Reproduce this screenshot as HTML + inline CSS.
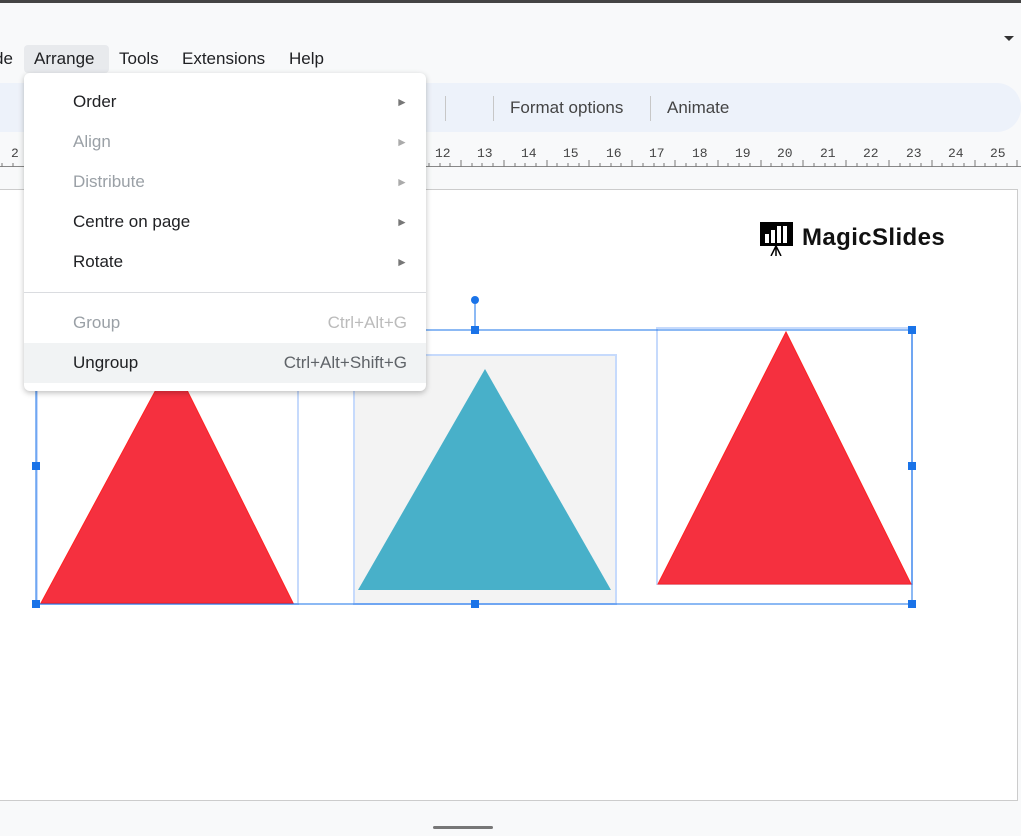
<!DOCTYPE html>
<html><head><style>
*{margin:0;padding:0;box-sizing:border-box}
body{width:1021px;height:836px;overflow:hidden;background:#f8f9fa;font-family:"Liberation Sans",Arial,sans-serif;position:relative}
.a{position:absolute}
.menu span{position:absolute;top:49px;font-size:17px;color:#202124}
.mi{position:absolute;left:73px;font-size:17px;color:#202124}
.dis{color:#9aa0a6}
.arr{position:absolute;left:396px;font-size:12px;color:#777}
.sc{position:absolute;right:614px;font-size:17px;color:#80868b}
.rn{position:absolute;top:146px;font-size:13px;color:#444;font-family:"Liberation Mono",monospace}
.h{position:absolute;width:8px;height:8px;background:#1a73e8}
</style></head><body>
<div class="a" style="left:0;top:0;width:1021px;height:3px;background:#444"></div>
<div class="a" style="left:1004px;top:36px;border-left:5px solid transparent;border-right:5px solid transparent;border-top:5px solid #333"></div>
<div class="a" style="left:24px;top:45px;width:85px;height:28px;background:#e8eaed;border-radius:4px"></div>
<div class="menu"><span style="left:-6px">de</span><span style="left:34px">Arrange</span><span style="left:119px">Tools</span><span style="left:182px">Extensions</span><span style="left:289px">Help</span></div>
<div class="a" style="left:0;top:83px;width:1021px;height:49px;background:#edf2fa;border-radius:0 24px 24px 0"></div>
<div class="a" style="left:445px;top:96px;width:1px;height:25px;background:#c7c7c7"></div>
<div class="a" style="left:493px;top:96px;width:1px;height:25px;background:#c7c7c7"></div>
<div class="a" style="left:650px;top:96px;width:1px;height:25px;background:#c7c7c7"></div>
<div class="a" style="left:510px;top:98px;font-size:17px;color:#444">Format options</div>
<div class="a" style="left:667px;top:98px;font-size:17px;color:#444">Animate</div>
<div class="a" style="left:0;top:166px;width:1021px;height:1px;background:#888"></div>
<div class="a" style="left:0;top:189px;width:1018px;height:612px;background:#fff;border:1px solid #ccc;border-left:none"></div>
<svg class="a" style="left:760px;top:222px" width="34" height="34" viewBox="0 0 34 34"><rect x="0" y="0" width="33" height="24" fill="#000"/><rect x="5" y="12" width="4" height="9" fill="#fff"/><rect x="11" y="8" width="4" height="13" fill="#fff"/><rect x="17" y="4" width="4" height="17" fill="#fff"/><rect x="23" y="4" width="4" height="17" fill="#fff"/><path d="M16 24v10M16 24l-5 10M16 24l5 10" stroke="#000" stroke-width="1.5"/></svg>
<div class="a" style="left:802px;top:224px;font-size:24px;font-weight:bold;color:#111;letter-spacing:0.4px">MagicSlides</div>
<div class="a" style="left:353px;top:354px;width:264px;height:251px;background:#f3f3f3;border:2px solid #c6dafc"></div>
<div class="a" style="left:656px;top:327px;width:257px;height:258px;border:2px solid #c6dafc"></div>
<div class="a" style="left:36px;top:330px;width:263px;height:275px;border:2px solid #c6dafc"></div>
<svg class="a" style="left:0;top:0" width="1021" height="836">
<polygon points="172,360 41,603 293,603" fill="#f5303f" stroke="#f22" stroke-width="1"/>
<polygon points="485,369 358,590 611,590" fill="#48b0c9"/>
<polygon points="786,332 658,584 911,584" fill="#f5303f" stroke="#f22" stroke-width="1"/>
<rect x="36" y="330" width="876" height="274" fill="none" stroke="#1a73e8" stroke-width="1"/>
<line x1="475" y1="300" x2="475" y2="330" stroke="#1a73e8"/>
<circle cx="475" cy="300" r="4" fill="#1a73e8"/>
</svg>
<div class="h" style="left:32px;top:326px"></div><div class="h" style="left:471px;top:326px"></div><div class="h" style="left:908px;top:326px"></div>
<div class="h" style="left:32px;top:462px"></div><div class="h" style="left:908px;top:462px"></div>
<div class="h" style="left:32px;top:600px"></div><div class="h" style="left:471px;top:600px"></div><div class="h" style="left:908px;top:600px"></div>
<div class="a" style="left:433px;top:826px;width:60px;height:3px;background:#777;border-radius:2px"></div>
<div class="a" style="left:24px;top:73px;width:402px;height:318px;background:#fff;border-radius:6px;box-shadow:0 2px 6px rgba(0,0,0,.25)"></div>
<div class="a" style="left:24px;top:343px;width:402px;height:40px;background:#f1f3f4"></div>
<div class="a" style="left:24px;top:292px;width:402px;height:1px;background:#dadce0"></div>
<div class="mi" style="top:92px">Order</div><div class="arr" style="top:95px">►</div>
<div class="mi dis" style="top:132px">Align</div><div class="arr" style="top:135px;color:#aaa">►</div>
<div class="mi dis" style="top:172px">Distribute</div><div class="arr" style="top:175px;color:#aaa">►</div>
<div class="mi" style="top:212px">Centre on page</div><div class="arr" style="top:215px">►</div>
<div class="mi" style="top:252px">Rotate</div><div class="arr" style="top:255px">►</div>
<div class="mi dis" style="top:313px">Group</div><div class="sc" style="top:313px;color:#bbb">Ctrl+Alt+G</div>
<div class="mi" style="top:353px">Ungroup</div><div class="sc" style="top:353px;color:#5f6368">Ctrl+Alt+Shift+G</div>
<div class="rn" style="left:11px">2</div>
<div class="rn" style="left:435px">12</div><div class="rn" style="left:477px">13</div><div class="rn" style="left:521px">14</div><div class="rn" style="left:563px">15</div><div class="rn" style="left:606px">16</div><div class="rn" style="left:649px">17</div><div class="rn" style="left:692px">18</div><div class="rn" style="left:735px">19</div><div class="rn" style="left:777px">20</div><div class="rn" style="left:820px">21</div><div class="rn" style="left:863px">22</div><div class="rn" style="left:906px">23</div><div class="rn" style="left:948px">24</div><div class="rn" style="left:990px">25</div>
<svg class="a" style="left:426px;top:156px" width="595" height="11">
<path d="M3 7v4M14 7v4M24 7v4M35 4v7M46 7v4M56 7v4M67 7v4M78 4v7M89 7v4M99 7v4M110 7v4M121 4v7M131 7v4M142 7v4M153 7v4M163 4v7M174 7v4M185 7v4M195 7v4M206 4v7M217 7v4M228 7v4M238 7v4M249 4v7M260 7v4M270 7v4M281 7v4M292 4v7M302 7v4M313 7v4M324 7v4M335 4v7M345 7v4M356 7v4M367 7v4M377 4v7M388 7v4M399 7v4M409 7v4M420 4v7M431 7v4M441 7v4M452 7v4M463 4v7M474 7v4M484 7v4M495 7v4M506 4v7M516 7v4M527 7v4M538 7v4M549 4v7M559 7v4M570 7v4M581 7v4M591 4v7" stroke="#777"/>
</svg>
<svg class="a" style="left:0;top:156px" width="24" height="11"><path d="M2 7v4M13 7v4" stroke="#777"/></svg>
</body></html>
